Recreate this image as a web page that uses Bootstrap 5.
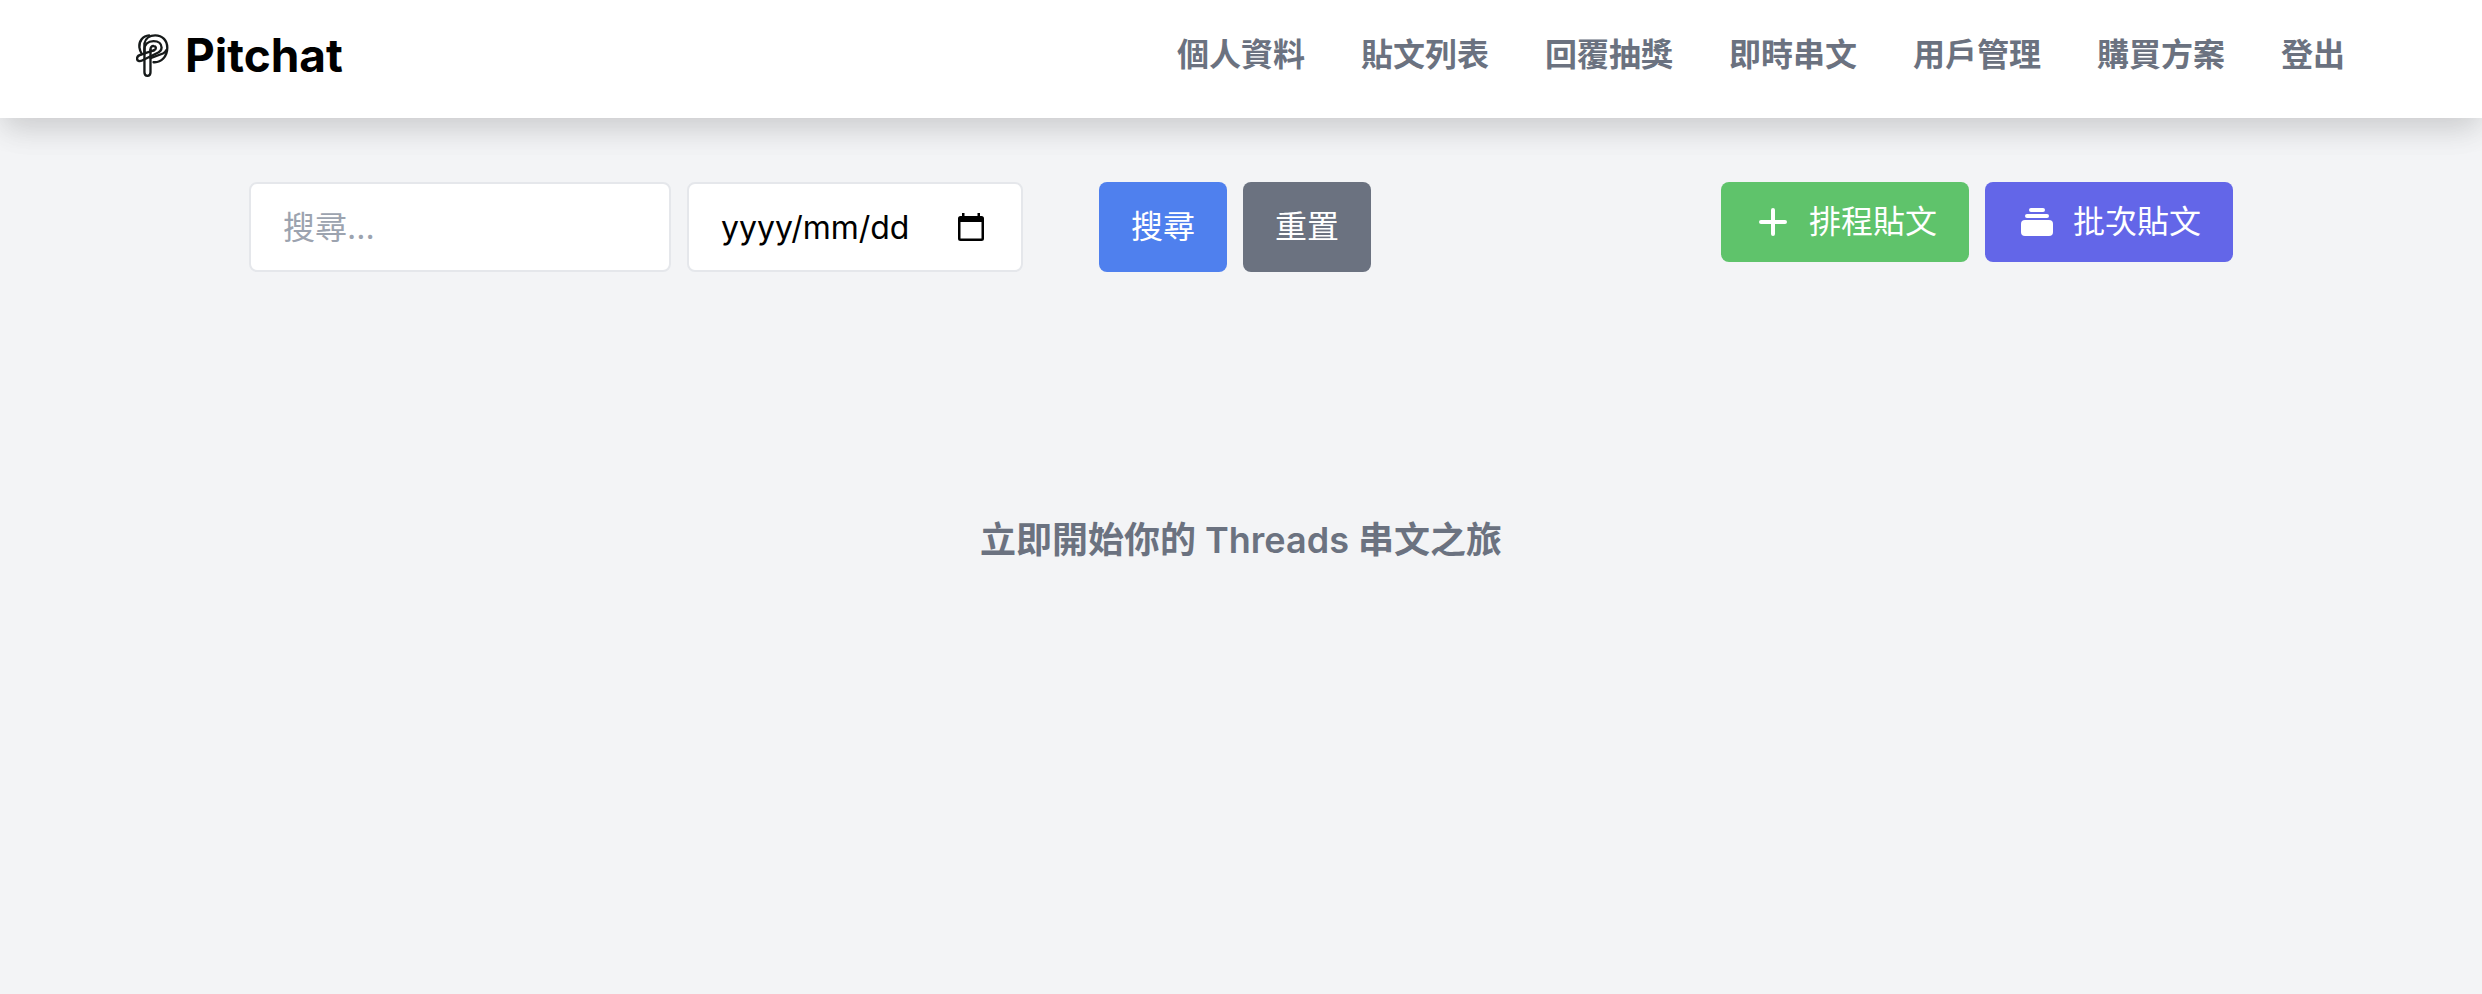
<!DOCTYPE html>
<html lang="zh-Hant">
<head>
<meta charset="utf-8">
<meta name="viewport" content="width=device-width, initial-scale=1">
<title>Pitchat</title>
<link href="https://cdn.jsdelivr.net/npm/bootstrap@5.3.0/dist/css/bootstrap.min.css" rel="stylesheet">
<style>
  body { background: #f3f4f6; color: #000; font-family: Inter, "Noto Sans CJK TC", sans-serif; font-size: 32px; line-height: 48px; }
  .site-header { padding: 20px 137px 28px 136px; background: #fff; box-shadow: 0 20px 30px -6px rgba(0,0,0,.06), 0 8px 30px rgba(0,0,0,.12); }
  .brand { gap: 16px; color: #000; font-size: 46px; font-weight: 700; line-height: 70px; }
  .site-nav { gap: 56px; }
  .site-nav a { color: #6b7280; font-weight: 700; }
  .page { max-width: 1984px; padding-top: 64px; }
  .bar, .group-tight { gap: 16px; }
  .group-search { gap: 76px; }
  .field { height: 90px; padding: 0 32px; border: 2px solid #e5e7eb; border-radius: 8px; font-size: 32px; line-height: 48px; }
  .field::placeholder { color: #9ca3af; opacity: 1; }
  .field-search { width: 422px; }
  .date-box { width: 336px; }
  .field-date::placeholder { color: #000; }
  .pick { right: 34px; padding: 4px; line-height: 0; }
  .act { height: 80px; padding: 0 32px; gap: 16px; border: 0; border-radius: 8px; color: #fff; font-size: 32px; line-height: 48px; }
  .act-tall { height: 90px; }
  .bg-search { background: #4f80ee; }
  .bg-reset { background: #6b7280; }
  .bg-plan { background: #5fc36b; }
  .bg-batch { background: #6366e8; }
  .empty-note { margin-top: 240px; color: #6b7280; font-size: 36px; font-weight: 600; line-height: 56px; }
</style>
</head>
<body>
<header class="site-header d-flex flex-wrap align-items-center justify-content-between position-relative">
  <a class="brand d-flex align-items-center text-decoration-none" href="#">
    <svg width="33" height="43" viewBox="48 38 98 128" fill="none" stroke="#161a1a" stroke-width="7" stroke-linecap="round" aria-hidden="true">
      <path d="M87 42C68 43 56 60 58 78C59 87 62 93 66 98"/>
      <path d="M73 98V85C73 68 84 59 100 59C115 59 124 67 124 78C124 87 119 92 108 96L66 117C58 121 51 118 51 111C51 104 56 101 64 99L101 87"/>
      <path d="M91 85V152C91 166 73 166 73 152V66C76 51 89 42 105 42C127 42 141 58 141 79C141 105 123 124 100 122"/>
      <path d="M91 110L128 96C134 93 137 89 138 86"/>
      <path d="M91 85C91 77 95 73 101 74C109 75 109 84 101 87"/>
    </svg>
    <span>Pitchat</span>
  </a>
  <nav class="site-nav d-flex flex-wrap">
    <a class="text-decoration-none" href="#">個人資料</a>
    <a class="text-decoration-none" href="#">貼文列表</a>
    <a class="text-decoration-none" href="#">回覆抽獎</a>
    <a class="text-decoration-none" href="#">即時串文</a>
    <a class="text-decoration-none" href="#">用戶管理</a>
    <a class="text-decoration-none" href="#">購買方案</a>
    <a class="text-decoration-none" href="#">登出</a>
  </nav>
</header>
<main class="page mx-auto">
  <div class="bar d-flex flex-wrap align-items-start justify-content-between">
    <form class="group-search d-flex flex-wrap">
      <div class="group-tight d-flex flex-wrap">
        <input class="field field-search bg-white" type="text" placeholder="搜尋..." aria-label="搜尋">
        <div class="date-box position-relative d-flex align-items-center">
          <input class="field field-date bg-white w-100" type="text" placeholder="yyyy/mm/dd" aria-label="日期">
          <button class="pick btn border-0 position-absolute" type="button" aria-label="選擇日期">
            <svg width="28" height="28" viewBox="0 0 28 28" aria-hidden="true"><path fill="#000" fill-rule="evenodd" d="M5 0h2.500v3h13V0H23v3h1.500a2.500 2.500 0 0 1 2.500 2.500v20a2.500 2.500 0 0 1-2.500 2.500h-21A2.500 2.500 0 0 1 1 25.500v-20A2.500 2.500 0 0 1 3.500 3H5zM3.500 9v16.500h21V9z"/></svg>
          </button>
        </div>
      </div>
      <div class="group-tight d-flex">
        <button class="act act-tall bg-search" type="submit">搜尋</button>
        <button class="act act-tall bg-reset" type="reset">重置</button>
      </div>
    </form>
    <div class="group-tight d-flex flex-wrap">
      <button class="act bg-plan d-flex align-items-center" type="button">
        <svg width="40" height="40" viewBox="0 0 40 40" aria-hidden="true"><path d="M20 8v24M8 20h24" stroke="#fff" stroke-width="4" stroke-linecap="round"/></svg>
        排程貼文
      </button>
      <button class="act bg-batch d-flex align-items-center" type="button">
        <svg width="40" height="40" viewBox="0 0 40 40" fill="#fff" aria-hidden="true"><rect x="12" y="6" width="16" height="4" rx="2"/><rect x="8" y="12" width="24" height="4" rx="2"/><rect x="4" y="18" width="32" height="16" rx="4"/></svg>
        批次貼文
      </button>
    </div>
  </div>
  <p class="empty-note text-center mb-0">立即開始你的 Threads 串文之旅</p>
</main>
<script src="https://cdn.jsdelivr.net/npm/bootstrap@5.3.0/dist/js/bootstrap.bundle.min.js"></script>
</body>
</html>
